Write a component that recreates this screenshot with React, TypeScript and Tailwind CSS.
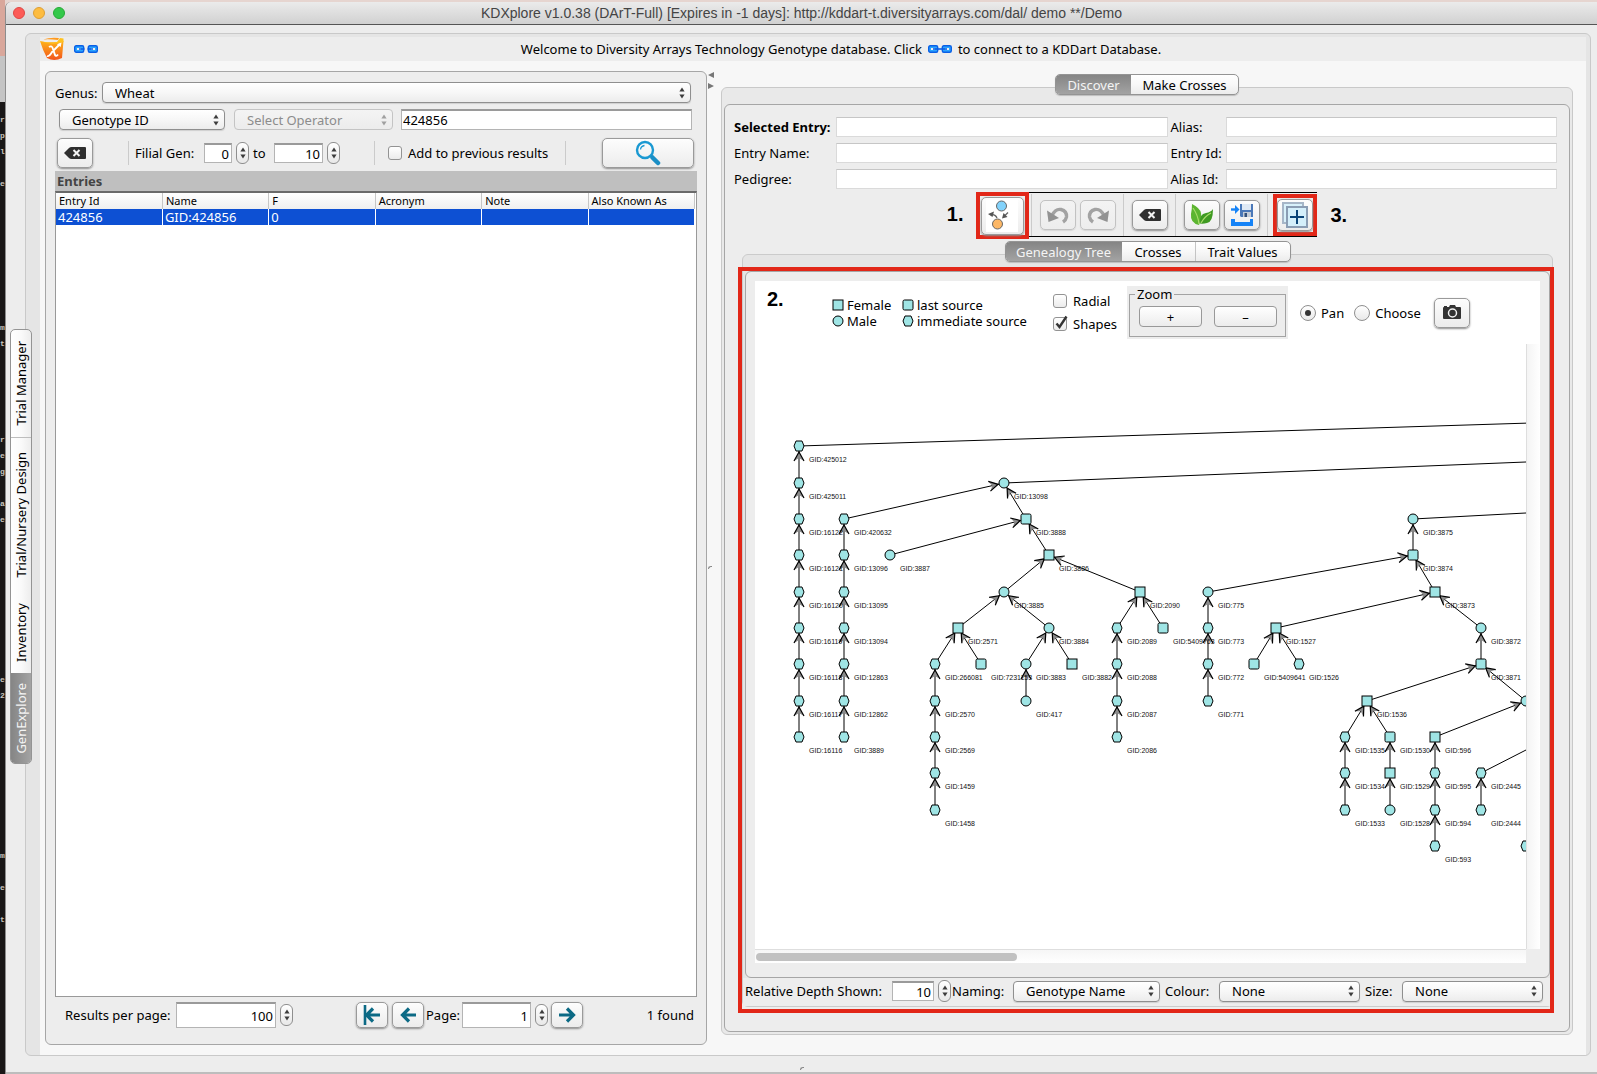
import React from "react";
import clsx from "clsx";

/* ---------- shared controls ---------- */

function Arrows({ dim = false }: { dim?: boolean }) {
  return (
    <svg viewBox="0 0 6 12" className="h-3 w-[6px]" fill={dim ? "#a0a0a0" : "#3c3c3c"} aria-hidden="true">
      <path d="M3 0.5 5.6 4.5H0.4Z" />
      <path d="M3 11.5 5.6 7.5H0.4Z" />
    </svg>
  );
}

function Select({ id, label, value, className, disabled = false }: { id: string; label?: string; value: string; className?: string; disabled?: boolean }) {
  return (
    <div className={clsx("relative min-w-0", className)}>
      <select
        id={id}
        aria-label={label}
        disabled={disabled}
        className={clsx(
          "block h-[21px] w-full appearance-none rounded border bg-linear-to-b pr-5 pl-3 text-[13px] leading-[18px]",
          disabled ? "border-[#c4c4c4] from-[#f4f4f4] to-[#ececec] text-[#8c8c8c]" : "border-[#8f8f8f] from-white via-[#f7f7f7] to-[#ececec] text-black shadow-[0_1px_1px_#cfcfcf]",
        )}
      >
        <option>{value}</option>
      </select>
      <span className="pointer-events-none absolute inset-y-0 right-[6px] flex items-center">
        <Arrows dim={disabled} />
      </span>
    </div>
  );
}

function Stepper({ label, className }: { label: string; className?: string }) {
  return (
    <button aria-label={label} className={clsx("flex h-[22px] w-[13px] shrink-0 items-center justify-center rounded-[6px] border border-[#8f8f8f] bg-linear-to-b from-white to-[#e8e8e8]", className)}>
      <Arrows />
    </button>
  );
}

function NumberBox({ id, label, value, className }: { id: string; label?: string; value: string; className: string }) {
  return (
    <input
      id={id}
      aria-label={label}
      defaultValue={value}
      className={clsx("shrink-0 border border-t-2 border-[#b4b4b4] border-t-[#9a9a9a] bg-white pr-[2px] text-right text-[13px]", className)}
    />
  );
}

function IconButton({ label, className, disabled = false, children }: { label: string; className?: string; disabled?: boolean; children: React.ReactNode }) {
  return (
    <button
      aria-label={label}
      className={clsx(
        "flex shrink-0 items-center justify-center rounded-[5px] border bg-linear-to-b",
        disabled ? "border-[#c2c2c2] from-[#f3f3f3] to-[#ededed] shadow-[0_1px_1px_#d5d5d5]" : "border-[#9a9a9a] from-[#fdfdfd] to-[#ececec] shadow-[0_1px_2px_#8d8d8d]",
        className,
      )}
    >
      {children}
    </button>
  );
}

function Check({ id, label, checked = false, className }: { id: string; label: string; checked?: boolean; className?: string }) {
  return (
    <div className={clsx("flex items-center gap-[6px]", className)}>
      <span className="relative h-[14px] w-[14px]">
        <input id={id} type="checkbox" defaultChecked={checked} className="peer block h-[14px] w-[14px] appearance-none rounded-[3px] border border-[#939393] bg-linear-to-b from-white to-[#ebebeb]" />
        <svg viewBox="0 0 16 18" className="pointer-events-none absolute -top-[3px] left-0 hidden h-[18px] w-4 peer-checked:block" fill="none" stroke="#333" strokeWidth="2.4" aria-hidden="true">
          <path d="M3.5 9.5 6.5 13 13.5 2.5" />
        </svg>
      </span>
      <label htmlFor={id}>{label}</label>
    </div>
  );
}

function Radio({ id, label, checked = false, className }: { id: string; label: string; checked?: boolean; className?: string }) {
  return (
    <div className={clsx("flex items-center gap-[5px]", className)}>
      <span className="relative h-4 w-4">
        <input id={id} name="mode" type="radio" defaultChecked={checked} className="peer block h-4 w-4 appearance-none rounded-full border border-[#8f8f8f] bg-linear-to-b from-white to-[#e9e9e9]" />
        <span className="pointer-events-none absolute top-[5px] left-[5px] hidden h-[6px] w-[6px] rounded-full bg-[#333] peer-checked:block" />
      </span>
      <label htmlFor={id}>{label}</label>
    </div>
  );
}

function Tabs({ items, label }: { items: { name: string; width: string; divided?: boolean }[]; label: string }) {
  return (
    <div role="tablist" aria-label={label} className="relative z-10 flex h-[21px] overflow-hidden rounded-[5px] border border-[#949494] bg-linear-to-b from-white via-[#f8f8f8] to-[#ececec] shadow-[0_1px_1px_#bdbdbd]">
      {items.map((t, i) => (
        <button
          key={t.name}
          role="tab"
          aria-selected={i === 0}
          className={clsx("text-center text-[13px] leading-[18px] whitespace-nowrap", t.width, i === 0 ? "bg-linear-to-b from-[#858585] to-[#a3a3a3] text-[#f4f4f4]" : "text-black", t.divided && "border-l border-[#c4c4c4]")}
        >
          {t.name}
        </button>
      ))}
    </div>
  );
}

const Sep = ({ className }: { className?: string }) => <span className={clsx("w-px shrink-0 bg-[#cbcbcb]", className)} />;

/* ---------- icons ---------- */

function LinkIcon({ wide = false }: { wide?: boolean }) {
  return (
    <svg viewBox="0 0 24 8" className="h-2 w-6" fill="none" aria-hidden="true">
      <g fill="#2aa4ff" stroke="#0a5fe6" strokeWidth="1.4">
        <rect x="0.7" y="0.7" width="9" height="6.600" rx="1.5" />
        <rect x="14.300" y="0.7" width="9" height="6.600" rx="1.5" />
      </g>
      <path d="M3 4H7M17 4H21" stroke="#eee" strokeWidth="2.200" />
      <path d={wide ? "M5 4H19" : "M5 4H10.500M13.500 4H19"} stroke="#0a5fe6" strokeWidth="1.600" />
    </svg>
  );
}

function AppLogo() {
  return (
    <svg viewBox="0 0 24 24" className="h-6 w-6" aria-hidden="true">
      <defs>
        <linearGradient id="logo" x1="0" y1="0" x2="0" y2="1">
          <stop offset="0" stopColor="#ffb31a" />
          <stop offset="1" stopColor="#f2541b" />
        </linearGradient>
      </defs>
      <path d="M0 4C7 6 15 5.500 23.500 4L22 21Q14 25 7 21Q3 14 0 4Z" fill="url(#logo)" />
      <path d="M0 4Q8 7 17 5L20 1 23.500 1.500V5Q11 9 0 4Z" fill="#ffc21f" />
      <path d="M3 2.500Q10 0 19 1L18 3Q10 2 3 2.500Z" fill="#ff9a1f" />
      <path d="M9 10Q12 8 13 12L15 18Q16 20 18 17.500M7 19Q9 20 12 15L20 7" fill="none" stroke="#fff" strokeWidth="1.900" />
      <path d="M17 7.200 21.500 5.500 20.700 10Z" fill="#fff" />
    </svg>
  );
}

function ClearIcon() {
  return (
    <svg viewBox="0 0 22 12" className="h-3 w-[22px]" aria-hidden="true">
      <path d="M0 6 5 1Q6 0 7.500 0H21Q22 0 22 1V11Q22 12 21 12H7.500Q6 12 5 11Z" fill="#2f2f2f" />
      <path d="M9.500 3 15.500 9M15.500 3 9.500 9" stroke="#f4f4f4" strokeWidth="2" />
    </svg>
  );
}

function SearchIcon() {
  return (
    <svg viewBox="0 0 26 26" className="h-[26px] w-[26px]" fill="none" aria-hidden="true">
      <circle cx="10" cy="10" r="8" stroke="#1a99d2" strokeWidth="2.400" />
      <path d="M5.500 9.500Q6 6 9.500 5.500" stroke="#1a99d2" strokeWidth="1.300" />
      <path d="M15.500 15.500 18 18" stroke="#1a99d2" strokeWidth="2.200" />
      <path d="M17.500 17.500 23 23" stroke="#1a8fc6" strokeWidth="4.500" strokeLinecap="round" />
    </svg>
  );
}

function PageArrow({ dir }: { dir: "first" | "prev" | "next" }) {
  return (
    <svg viewBox="0 0 18 20" className="h-5 w-[18px]" fill="none" stroke="#0c6a85" strokeWidth="3.200" aria-hidden="true">
      {dir === "first" && <path d="M2 0V20" strokeWidth="2.600" />}
      {dir === "next" ? <path d="M1 10H15M9 3.500 15.500 10 9 16.500" /> : <path d="M17 10H4M10 3.500 3.500 10 10 16.500" />}
    </svg>
  );
}

function TreeIcon() {
  return (
    <svg viewBox="0 0 32 32" className="h-8 w-8" aria-hidden="true">
      <rect width="32" height="32" fill="#fff" />
      <circle cx="15.500" cy="6" r="5" fill="#82d2fb" stroke="#666" />
      <circle cx="11.500" cy="24" r="5" fill="#fcb766" stroke="#666" />
      <path d="M11 18Q10 15 6 14.500M22 12.500 18 16.500" fill="none" stroke="#666" strokeWidth="1.300" />
      <path d="M2 14 8 11.500 6.500 17Z M16 18.500 17.500 13 21.500 17Z" fill="#555" />
    </svg>
  );
}

function Undo({ flip = false }: { flip?: boolean }) {
  return (
    <svg viewBox="0 0 22 18" className={clsx("h-[18px] w-[22px]", flip && "-scale-x-100")} aria-hidden="true">
      <path d="M5 9.500Q8.500 2.500 14 3.500Q20 5 19.500 11Q19 14 16 16" fill="none" stroke="#a2a2a2" strokeWidth="3.400" />
      <path d="M0 4.500 1.500 16 12 12Z" fill="#929292" />
    </svg>
  );
}

function Leaf() {
  return (
    <svg viewBox="0 0 24 22" className="h-[22px] w-6" aria-hidden="true">
      <path d="M2 0Q10 4 11 9Q12 15 9 21Q0 19 1 10Q2 5 2 0Z" fill="#5cb531" />
      <path d="M23 5Q23 18 17 19Q13 20 10 19.500Q9 10 16 9Q21 8 23 5Z" fill="#3f9a22" />
      <path d="M3 4Q8 11 9 20M21 9Q15 12 11 19" fill="none" stroke="#a9dc6b" strokeWidth="1.200" />
    </svg>
  );
}

function SaveIcon() {
  return (
    <svg viewBox="0 0 24 24" className="h-6 w-6" aria-hidden="true">
      <path d="M10 1H23V14H11L10 13Z" fill="#4a78b8" />
      <path d="M12 1H21V7H12Z" fill="#dfe9f4" />
      <path d="M13 9H21V14H13Z" fill="#c3cbd6" />
      <path d="M14.500 10H17V14H14.500Z" fill="#31507c" />
      <path d="M1 6.500H6" stroke="#1583f7" strokeWidth="2.400" />
      <path d="M5 2 9.500 6.500 5 11Z" fill="#1583f7" />
      <path d="M1 16H5V19H20V16H23V23H1Z" fill="#1583f7" />
    </svg>
  );
}

function AddLayerIcon() {
  return (
    <svg viewBox="0 0 26 26" className="h-[26px] w-[26px]" aria-hidden="true">
      <rect x="1" y="1" width="20" height="20" fill="#d8f1fb" stroke="#a6b6c8" strokeWidth="2" />
      <rect x="5" y="5" width="20" height="20" fill="#d4effb" stroke="#8a9db4" strokeWidth="2" />
      <path d="M15 8V22M8 15H22" stroke="#0a4478" strokeWidth="2" />
    </svg>
  );
}

function Camera() {
  return (
    <svg viewBox="0 0 18 15" className="h-[15px] w-[18px]" aria-hidden="true">
      <path d="M0 3Q0 2 1 2V1H4V2H6L7 0H12L13 2H17Q18 2 18 3V13Q18 14 17 14H1Q0 14 0 13Z" fill="#333" />
      <circle cx="9.500" cy="8" r="4" fill="none" stroke="#f2f2f2" strokeWidth="1.500" />
    </svg>
  );
}

/* ---------- genealogy graph ---------- */

type Shape = "hex" | "circle" | "square" | "round";

function Glyph({ x, y, shape }: { x: number; y: number; shape: Shape }) {
  const style = { fill: "#9fe5e5", stroke: "#000", strokeWidth: 1 };
  if (shape === "circle") return <circle cx={x} cy={y} r={5} {...style} />;
  if (shape === "hex") return <path d={`M${x - 5} ${y}l2-5h6l2 5-2 5h-6z`} {...style} />;
  return <rect x={x - 5} y={y - 5} width={10} height={10} rx={shape === "round" ? 1.5 : 0} {...style} />;
}

const rows = [102, 139, 175, 211, 248, 284, 320, 357, 393, 429, 466, 502];
const colX = (k: number) => Math.round(44 + k * 22.73);

/* column, row, shape, identifier, parent column, parent row */
type GraphNode = [number, number, Shape, string, number?, number?];

const nodes: GraphNode[] = [
  [0, 0, "hex", "425012"],
  [0, 1, "hex", "425011", 0, 0],
  [0, 2, "hex", "16122", 0, 1],
  [0, 3, "hex", "16121", 0, 2],
  [0, 4, "hex", "16120", 0, 3],
  [0, 5, "hex", "16119", 0, 4],
  [0, 6, "hex", "16118", 0, 5],
  [0, 7, "hex", "16117", 0, 6],
  [0, 8, "hex", "16116", 0, 7],
  [2, 2, "hex", "420632", 9, 1],
  [2, 3, "hex", "13096", 2, 2],
  [2, 4, "hex", "13095", 2, 3],
  [2, 5, "hex", "13094", 2, 4],
  [2, 6, "hex", "12863", 2, 5],
  [2, 7, "hex", "12862", 2, 6],
  [2, 8, "hex", "3889", 2, 7],
  [9, 1, "circle", "13098"],
  [10, 2, "round", "3888", 9, 1],
  [4, 3, "circle", "3887", 10, 2],
  [11, 3, "square", "3886", 10, 2],
  [9, 4, "circle", "3885", 11, 3],
  [15, 4, "square", "2090", 11, 3],
  [7, 5, "square", "2571", 9, 4],
  [11, 5, "circle", "3884", 9, 4],
  [14, 5, "hex", "2089", 15, 4],
  [16, 5, "round", "5409763", 15, 4],
  [6, 6, "hex", "266081", 7, 5],
  [8, 6, "round", "7231153", 7, 5],
  [10, 6, "circle", "3883", 11, 5],
  [12, 6, "square", "3882", 11, 5],
  [10, 7, "circle", "417", 10, 6],
  [6, 7, "hex", "2570", 6, 6],
  [6, 8, "hex", "2569", 6, 7],
  [6, 9, "hex", "1459", 6, 8],
  [6, 10, "hex", "1458", 6, 9],
  [14, 6, "hex", "2088", 14, 5],
  [14, 7, "hex", "2087", 14, 6],
  [14, 8, "hex", "2086", 14, 7],
  [27, 2, "circle", "3875"],
  [27, 3, "round", "3874", 27, 2],
  [18, 4, "circle", "775", 27, 3],
  [18, 5, "hex", "773", 18, 4],
  [18, 6, "hex", "772", 18, 5],
  [18, 7, "hex", "771", 18, 6],
  [28, 4, "square", "3873", 27, 3],
  [21, 5, "square", "1527", 28, 4],
  [20, 6, "round", "5409641", 21, 5],
  [22, 6, "hex", "1526", 21, 5],
  [30, 5, "circle", "3872", 28, 4],
  [30, 6, "round", "3871", 30, 5],
  [25, 7, "square", "1536", 30, 6],
  [32, 7, "circle", "", 30, 6],
  [24, 8, "hex", "1535", 25, 7],
  [24, 9, "hex", "1534", 24, 8],
  [24, 10, "hex", "1533", 24, 9],
  [26, 8, "round", "1530", 25, 7],
  [26, 9, "square", "1529", 26, 8],
  [26, 10, "circle", "1528", 26, 9],
  [28, 8, "square", "596", 32, 7],
  [28, 9, "hex", "595", 28, 8],
  [28, 10, "hex", "594", 28, 9],
  [28, 11, "hex", "593", 28, 10],
  [30, 9, "hex", "2445"],
  [30, 10, "hex", "2444", 30, 9],
  [32, 11, "hex", ""],
];

/* edges whose parent lies beyond the visible part of the canvas */
const longEdges = [
  [44, 102, 1571, 54],
  [249, 139, 1293, 97],
  [658, 175, 884, 163],
  [726, 429, 816, 383],
];

function Graph() {
  return (
    <svg className="absolute inset-0 h-full w-full" role="img" aria-label="Genealogy tree">
      {longEdges.map((e) => (
        <line key={e.join()} x1={e[0]} y1={e[1]} x2={e[2]} y2={e[3]} stroke="#000" />
      ))}
      {nodes.map(([k, r, , id, pk, pr]) => {
        if (pk === undefined || pr === undefined) return null;
        const x1 = colX(k), y1 = rows[r], x2 = colX(pk), y2 = rows[pr];
        const deg = (Math.atan2(y2 - y1, x2 - x1) * 180) / Math.PI;
        return (
          <g key={`${k}-${r}-${id}`}>
            <line x1={x1} y1={y1} x2={x2} y2={y2} stroke="#000" />
            <path d="M-6 0-15-5-12 0-15 5Z" fill="#8a8a8a" transform={`translate(${x2} ${y2}) rotate(${deg})`} />
            <path d="M-15-5-6 0-15 5" fill="none" stroke="#000" strokeWidth="1.200" transform={`translate(${x2} ${y2}) rotate(${deg})`} />
          </g>
        );
      })}
      {nodes.map(([k, r, shape]) => (
        <Glyph key={`${k}-${r}`} x={colX(k)} y={rows[r]} shape={shape} />
      ))}
      <g fontFamily="Liberation Sans, sans-serif" fontSize="7" fill="#111">
        {nodes.map(([k, r, , id]) => id && (
          <text key={`${k}-${r}`} x={colX(k) + 10} y={rows[r] + 16}>{`GID:${id}`}</text>
        ))}
      </g>
    </svg>
  );
}

/* ---------- page parts ---------- */

const terminal: Record<number, string> = { 0: "r", 1: "p", 2: "l", 4: "e", 13: "m", 14: "t", 20: "r", 21: "e", 22: "g", 24: "a", 25: "e", 35: "e", 36: "2", 46: "m", 48: "e", 50: "t" };

function Backdrop() {
  return (
    <div aria-hidden="true" className="flex w-[5px] shrink-0 flex-col bg-[#191717]">
      <div className="h-14 shrink-0 bg-[#d9a79b]" />
      <div className="h-[46px] shrink-0 bg-[#c4c4c4]" />
      <div className="mt-[10px] font-['Liberation_Mono'] text-[8px] leading-4 font-bold text-[#c8c4be]">
        {Array.from({ length: 51 }, (_, i) => (
          <div key={i} className="h-4">{terminal[i]}</div>
        ))}
      </div>
    </div>
  );
}

const modules = [
  { name: "Trial Manager", h: "h-[107px]" },
  { name: "Trial/Nursery Design", h: "h-[154px] border-t border-[#bdbdbd]" },
  { name: "Inventory", h: "h-[82px]" },
  { name: "GenExplore", h: "h-[90px] bg-linear-to-r from-[#858585] to-[#a3a3a3] text-[#f4f4f4]" },
];

function ModuleTabs() {
  return (
    <nav className="z-10 mt-1 ml-1 flex w-[22px] shrink-0 flex-col self-center overflow-hidden rounded-[5px] border border-[#949494] bg-linear-to-r from-white via-[#fafafa] to-[#ededed]">
      {modules.map((m) => (
        <button key={m.name} className={clsx("flex w-full items-center justify-center", m.h)}>
          <span className="rotate-180 whitespace-nowrap [writing-mode:vertical-rl]">{m.name}</span>
        </button>
      ))}
    </nav>
  );
}

const columns = ["Entry Id", "Name", "F", "Acronym", "Note", "Also Known As"];
const entry = ["424856", "GID:424856", "0", "", "", ""];

function SearchPanel() {
  return (
    <section className="flex min-w-0 flex-col rounded-md border border-[#a6a6a6] bg-[#ededed] px-[9px] pt-[10px] pb-[15px]">
      <div className="flex items-center pr-[6px]">
        <label htmlFor="genus" className="w-[47px] shrink-0">Genus:</label>
        <Select id="genus" value="Wheat" className="flex-1" />
      </div>
      <div className="mt-[6px] flex items-center pr-[5px] pl-1">
        <Select id="field" label="Search field" value="Genotype ID" className="w-[166px]" />
        <Select id="op" label="Operator" value="Select Operator" disabled className="ml-[9px] w-[159px]" />
        <input aria-label="Search value" defaultValue="424856" className="ml-2 h-[21px] min-w-0 flex-1 border border-t-2 border-[#b4b4b4] border-t-[#9a9a9a] bg-white px-px text-[13px]" />
      </div>
      <div className="mt-2 flex h-[30px] items-center pr-[3px] pl-[2px] whitespace-nowrap">
        <IconButton label="Clear" className="h-[30px] w-9"><ClearIcon /></IconButton>
        <Sep className="ml-[35px] h-6" />
        <label htmlFor="gen-from" className="ml-[6px] w-[69px]">Filial Gen:</label>
        <NumberBox id="gen-from" value="0" className="h-5 w-7" />
        <Stepper label="Change first generation" className="ml-1" />
        <label htmlFor="gen-to" className="ml-1 w-[21px]">to</label>
        <NumberBox id="gen-to" value="10" className="h-5 w-[49px]" />
        <Stepper label="Change last generation" className="ml-1" />
        <Sep className="ml-[34px] h-6" />
        <Check id="append" label="Add to previous results" className="ml-[13px]" />
        <Sep className="ml-[17px] h-6" />
        <span className="flex-1" />
        <IconButton label="Search" className="h-[30px] w-[92px]"><SearchIcon /></IconButton>
      </div>
      <h2 className="mt-[3px] h-5 bg-[#bfbfbf] pl-[2px] text-[13px] leading-5 font-bold text-[#444]">Entries</h2>
      <div className="flex-1 border border-t-2 border-[#999] border-t-[#6a6a6a] bg-white pr-px">
        <table className="w-full table-fixed border-collapse">
          <thead>
            <tr className="bg-linear-to-b from-white to-[#efefef]">
              {columns.map((c) => (
                <th key={c} className="h-4 border-r border-[#c6c6c6] p-0 pl-[3px] text-left text-[11px] leading-4 font-normal">{c}</th>
              ))}
            </tr>
          </thead>
          <tbody>
            <tr className="bg-[#0d50d3] text-white">
              {entry.map((v, i) => (
                <td key={columns[i]} className="h-4 border-r border-white p-0 pl-[2px] text-[13px] leading-[15px]">{v}</td>
              ))}
            </tr>
          </tbody>
        </table>
      </div>
      <div className="mt-1 flex h-7 items-center pr-[3px] pl-[10px] whitespace-nowrap">
        <label htmlFor="per-page" className="w-[111px]">Results per page:</label>
        <NumberBox id="per-page" value="100" className="h-[26px] w-[100px]" />
        <Stepper label="Change results per page" className="ml-1" />
        <IconButton label="First page" className="ml-[63px] h-[26px] w-8"><PageArrow dir="first" /></IconButton>
        <IconButton label="Previous page" className="ml-1 h-[26px] w-8"><PageArrow dir="prev" /></IconButton>
        <label htmlFor="page" className="ml-[2px] w-9">Page:</label>
        <NumberBox id="page" value="1" className="h-[26px] w-[69px]" />
        <Stepper label="Change page" className="ml-1" />
        <IconButton label="Next page" className="ml-[3px] h-[26px] w-8"><PageArrow dir="next" /></IconButton>
        <span className="flex-1 text-right">1 found</span>
      </div>
    </section>
  );
}

const fields = [
  { id: "selected", name: "Selected Entry:", bold: true },
  { id: "alias", name: "Alias:" },
  { id: "entry-name", name: "Entry Name:" },
  { id: "entry-id", name: "Entry Id:" },
  { id: "pedigree", name: "Pedigree:" },
  { id: "alias-id", name: "Alias Id:" },
];

function EntryForm() {
  return (
    <div className="grid grid-cols-[102px_1fr_58px_1fr] gap-y-[6px]">
      {fields.map((f, i) => (
        <React.Fragment key={f.id}>
          <label htmlFor={f.id} className={clsx("leading-5 whitespace-nowrap", i % 2 === 1 && "pl-[3px]", f.bold && "font-bold")}>{f.name}</label>
          <input id={f.id} className="h-5 min-w-0 border border-[#dadada] border-t-[#c6c6c6] bg-white px-1" />
        </React.Fragment>
      ))}
    </div>
  );
}

function Toolbar() {
  return (
    <div className="mt-[3px] flex items-start justify-center pl-[3px]">
      <strong className="mt-3 mr-3 font-['Liberation_Sans'] text-xl leading-5">1.</strong>
      <div className="flex h-[47px] w-[53px] items-center justify-center border-4 border-[#e22718]">
        <IconButton label="Show genealogy" className="h-[38px] w-[43px]"><TreeIcon /></IconButton>
      </div>
      <div className="flex h-[45px] items-center border-y border-black">
        <Sep className="ml-[2px] h-[42px]" />
        <IconButton label="Undo" disabled className="ml-2 h-[30px] w-9"><Undo /></IconButton>
        <IconButton label="Redo" disabled className="ml-1 h-[30px] w-9"><Undo flip /></IconButton>
        <Sep className="ml-[7px] h-[42px]" />
        <IconButton label="Clear tree" className="ml-2 h-[30px] w-9"><ClearIcon /></IconButton>
        <Sep className="ml-[7px] h-[42px]" />
        <IconButton label="Germplasm" className="ml-2 h-[30px] w-9"><Leaf /></IconButton>
        <IconButton label="Save" className="ml-1 h-[30px] w-9"><SaveIcon /></IconButton>
        <Sep className="ml-[7px] h-[42px]" />
        <div className="ml-[5px] flex h-[42px] w-11 items-center justify-center border-4 border-[#e22718]">
          <IconButton label="Add layer" className="h-8 w-9"><AddLayerIcon /></IconButton>
        </div>
      </div>
      <strong className="mt-[13px] ml-[14px] font-['Liberation_Sans'] text-xl leading-5">3.</strong>
    </div>
  );
}

const legend: { name: string; shape: Shape }[] = [
  { name: "Female", shape: "square" },
  { name: "last source", shape: "round" },
  { name: "Male", shape: "circle" },
  { name: "immediate source", shape: "hex" },
];

function GraphOptions() {
  return (
    <div className="flex h-[63px] items-center bg-white pl-3 whitespace-nowrap">
      <strong className="mt-2 w-[65px] self-start font-['Liberation_Sans'] text-xl leading-5">2.</strong>
      <ul className="grid w-[221px] grid-cols-[70px_1fr] leading-4">
        {legend.map((l) => (
          <li key={l.name} className="flex items-center gap-[3px]">
            <svg className="h-3 w-3" aria-hidden="true"><Glyph x={6} y={6} shape={l.shape} /></svg>
            {l.name}
          </li>
        ))}
      </ul>
      <div className="flex w-[74px] flex-col gap-[5px] leading-[18px]">
        <Check id="radial" label="Radial" />
        <Check id="shapes" label="Shapes" checked />
      </div>
      <div className="h-[53px] w-[161px] bg-[#ededed] px-[2px]">
        <fieldset className="h-[51px] border border-[#a3a3a3] pl-[9px]">
          <legend className="-ml-1 px-[2px] leading-4">Zoom</legend>
          <div className="mt-1 flex gap-3">
            {["+", "–"].map((s) => (
              <button key={s} aria-label={s === "+" ? "Zoom in" : "Zoom out"} className="h-[21px] w-[63px] rounded border border-[#999] bg-linear-to-b from-white to-[#ececec] leading-[18px]">{s}</button>
            ))}
          </div>
        </fieldset>
      </div>
      <Radio id="pan" label="Pan" checked className="ml-3" />
      <Radio id="choose" label="Choose" className="ml-[10px]" />
      <IconButton label="Take picture" className="ml-[13px] h-[30px] w-9"><Camera /></IconButton>
    </div>
  );
}

function TreePane() {
  return (
    <div className="relative -mt-[8px] mr-1 ml-2 flex flex-1 flex-col rounded-md border border-[#cbcbcb] bg-[#e5e5e5] px-[2px] pt-4">
      <div className="flex flex-1 flex-col rounded-md border border-[#a6a6a6] bg-[#ededed] px-[9px] pt-[9px] pb-[14px]">
        <GraphOptions />
        <div className="grid min-h-[540px] flex-1 grid-cols-[1fr_14px] grid-rows-[1fr_14px]">
          <div className="relative overflow-hidden bg-white"><Graph /></div>
          <div className="border-l border-[#dedede] bg-linear-to-r from-[#f4f4f4] to-white" />
          <div className="border-t border-[#dedede] bg-linear-to-b from-[#f6f6f6] to-white px-px pt-[3px]">
            <div className="h-2 w-[34%] rounded-full bg-[#c1c1c1]" />
          </div>
        </div>
      </div>
      <div className="-mx-[2px] flex items-center bg-[#ededed] pt-[2px] pr-[9px] pb-1 pl-[2px] whitespace-nowrap">
        <label htmlFor="depth" className="w-[147px] shrink-0">Relative Depth Shown:</label>
        <NumberBox id="depth" value="10" className="h-5 w-[42px]" />
        <Stepper label="Change depth" className="ml-1" />
        <label htmlFor="naming" className="ml-px w-[61px] shrink-0">Naming:</label>
        <Select id="naming" value="Genotype Name" className="flex-[147]" />
        <label htmlFor="colour" className="ml-[5px] w-[54px] shrink-0">Colour:</label>
        <Select id="colour" value="None" className="flex-[141]" />
        <label htmlFor="size" className="ml-[5px] w-[37px] shrink-0">Size:</label>
        <Select id="size" value="None" className="flex-[141]" />
      </div>
      <div aria-hidden="true" className="pointer-events-none absolute top-3 -right-[2px] -bottom-[7px] -left-[5px] border-4 border-[#e22718]" />
    </div>
  );
}

function DiscoverPanel() {
  return (
    <section className="mb-[10px] flex min-w-0 flex-col pt-[3px]">
      <div className="flex justify-center">
        <Tabs label="Mode" items={[{ name: "Discover", width: "w-[75px]" }, { name: "Make Crosses", width: "w-[107px]" }]} />
      </div>
      <div className="-mt-[8px] flex flex-1 flex-col rounded-md border border-[#c9c9c9] bg-[#e9e9e9] px-[2px] pt-4 pb-[2px]">
        <div className="flex flex-1 flex-col rounded-md border border-[#a6a6a6] bg-[#ededed] pt-3 pr-3 pb-6 pl-[9px]">
          <EntryForm />
          <Toolbar />
          <div className="mt-[2px] flex justify-center pl-1">
            <Tabs label="Entry views" items={[{ name: "Genealogy Tree", width: "w-[116px]" }, { name: "Crosses", width: "w-[73px]" }, { name: "Trait Values", width: "w-[95px]", divided: true }]} />
          </div>
          <TreePane />
        </div>
      </div>
    </section>
  );
}

export default function App() {
  return (
    <div className="flex min-h-screen bg-[#e6d5d0] font-['Noto_Sans','Open_Sans',sans-serif] text-[13px] leading-[18px] text-black">
      <Backdrop />
      <div className="mt-[2px] flex min-w-0 flex-1 flex-col rounded-tl-md border-l border-[#8d8d8d] bg-[#ededed]">
        <header className="relative flex h-[23px] items-center justify-center rounded-tl-md border-b border-[#555] bg-linear-to-b from-[#ebebeb] to-[#d1d1d1]">
          <div className="absolute inset-y-0 left-[7px] flex items-center gap-2">
            <button aria-label="Close" className="h-3 w-3 rounded-full border border-[#df4744] bg-[#fc5b57]" />
            <button aria-label="Minimise" className="h-3 w-3 rounded-full border border-[#de9f34] bg-[#fdbc40]" />
            <button aria-label="Zoom window" className="h-3 w-3 rounded-full border border-[#27aa35] bg-[#34c84a]" />
          </div>
          <h1 className="font-['Liberation_Sans'] text-[14px] text-[#444]">KDXplore v1.0.38 (DArT-Full) [Expires in -1 days]: http://kddart-t.diversityarrays.com/dal/ demo **/Demo</h1>
        </header>
        <div className="flex flex-1 pt-2 pr-[6px]">
          <ModuleTabs />
          <main className="-ml-[7px] flex min-w-0 flex-1 flex-col rounded-md border border-[#c9c9c9] bg-[#e5e5e5] pt-[3px] pr-1 pl-[14px]">
            <div className="relative flex h-6 items-center justify-center bg-[#ededed]">
              <div className="absolute inset-y-0 left-0 flex items-center gap-[10px]">
                <AppLogo />
                <LinkIcon />
              </div>
              <p className="flex items-center gap-[6px] pl-14 whitespace-nowrap">
                Welcome to Diversity Arrays Technology Genotype database. Click <LinkIcon wide /> to connect to a KDDart Database.
              </p>
            </div>
            <div className="grid flex-1 grid-cols-[662fr_14px_852fr] bg-[#f7f7f7] pt-[10px] pr-[13px] pb-[10px] pl-[5px]">
              <SearchPanel />
              <div className="flex flex-col items-center">
                <svg viewBox="0 0 6 18" className="mr-[6px] h-[18px] w-[6px]" fill="#777" aria-hidden="true">
                  <path d="M6 1V7L0 4Z M0 12V18L6 15Z" />
                </svg>
                <span className="flex-1" />
                <span className="mr-2 h-[3px] w-1 rounded-tl-full border-t border-l border-[#888]" />
                <span className="flex-1" />
              </div>
              <DiscoverPanel />
            </div>
          </main>
        </div>
        <footer className="flex h-[18px] items-end justify-center border-b-2 border-[#bdbdbd] pb-[2px]">
          <span className="h-[3px] w-1 rounded-tl-full border-t border-l border-[#888]" />
        </footer>
      </div>
    </div>
  );
}
